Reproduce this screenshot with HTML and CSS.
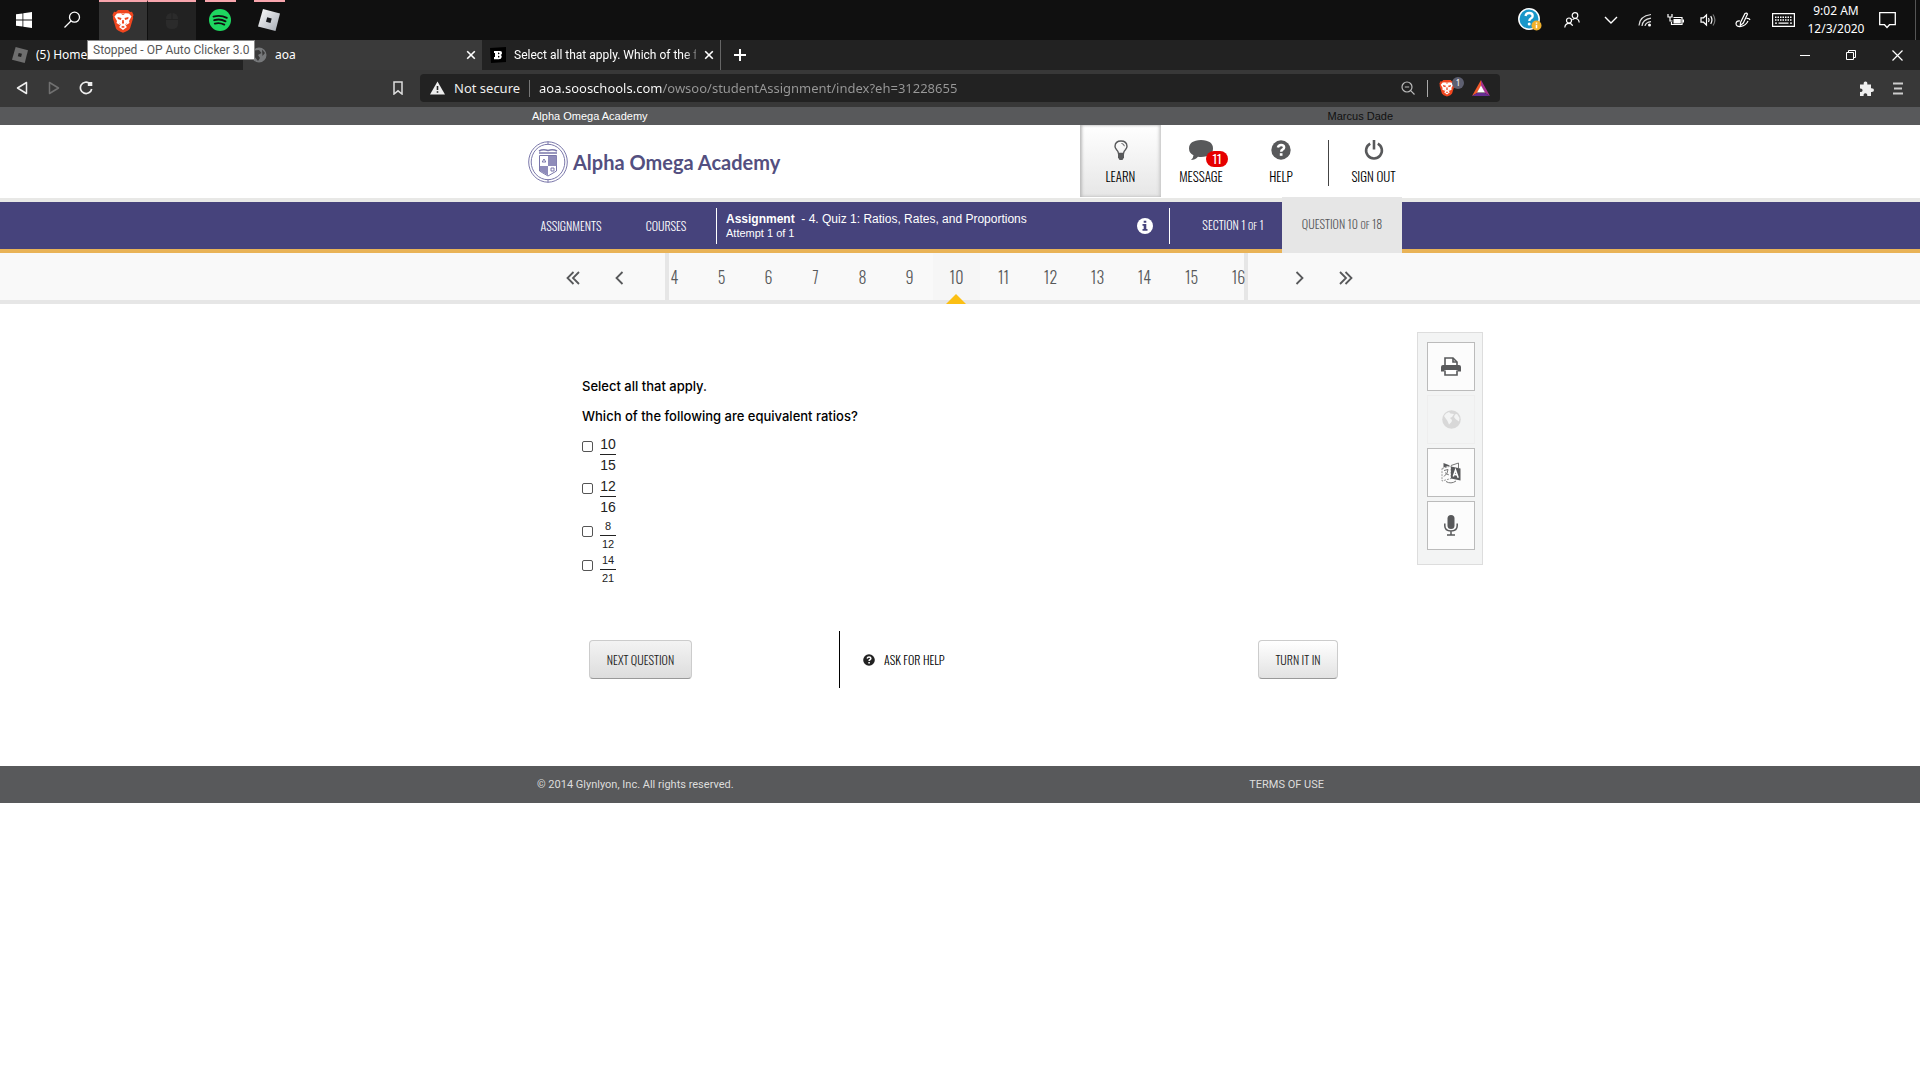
FILE: index.html
```html
<!DOCTYPE html>
<html lang="en">
<head>
<meta charset="utf-8">
<title>aoa</title>
<link rel="stylesheet" href="styles.css">
</head>
<body>
<svg class="defs" aria-hidden="true">
  <symbol id="lion" viewBox="0 0 22 24">
    <path fill="#f0461f" d="M6 1h10l2 2 2-.3L21.500 6l-.7 2 .4 1-3.200 10.500Q16.500 22 11 23.800 5.500 22 4 19.500L.8 9l.4-1-.7-2L2 2.700 4 3z"/>
    <path fill="#fff" d="M5 4.500l6-.5 6 .5 2.500 3L17 12l.5 2-4 2.500L15 18l-4 3-4-3 1.500-1.500L4.500 14l.5-2-2.500-4.500z"/>
    <path fill="#f0461f" d="M5.500 8l4 1-.7 2-3-1zM16.500 8l-4 1 .7 2 3-1zM8.500 4.500L11 6l2.500-1.500zM10.300 11h1.400l.4 3L11 15l-1.100-1zM7 14l2 1.500-1 .3zM15 14l-2 1.500 1 .3zM9 18l2-1.200L13 18l-2 1z"/>
  </symbol>
  <symbol id="close" viewBox="0 0 10 10"><path d="M1.200 1.200l7.600 7.600M8.800 1.200L1.200 8.800" fill="none" stroke="currentColor" stroke-width="1.600"/></symbol>
  <symbol id="question" viewBox="0 0 20 20">
    <circle cx="10" cy="10" r="9.700" fill="currentColor"/>
    <path d="M6.900 7.500Q7.500 4.900 10.100 4.900q3 0 3 2.500 0 1.300-1.600 2.200-1.300.7-1.300 2.100" fill="none" stroke="#fff" stroke-width="2.500"/>
    <path fill="#fff" d="M8.800 13.200h2.700v2.600H8.800z"/>
  </symbol>
  <symbol id="chev" viewBox="0 0 9 14"><path d="M7.500 1L1.500 7l6 6" fill="none" stroke="currentColor" stroke-width="1.800"/></symbol>
  <symbol id="dchev" viewBox="0 0 14 14"><path d="M7.500 1L1.500 7l6 6M13 1L7 7l6 6" fill="none" stroke="currentColor" stroke-width="1.800"/></symbol>
</svg>

<header class="taskbar">
  <div class="apps">
    <button class="app" aria-label="Start"><svg width="16" height="16" viewBox="0 0 16 16"><path fill="#fff" d="M0 2.300L6.500 1.400v6.200H0zM7.300 1.300L16 0v7.600H7.300zM0 8.400h6.500v6.200L0 13.700zM7.300 8.400H16V16l-8.700-1.300z"/></svg></button>
    <button class="app" aria-label="Search"><svg width="18" height="18" viewBox="0 0 18 18" fill="none" stroke="#fff" stroke-width="1.300"><circle cx="11.500" cy="6.200" r="5"/><path d="M8 10L1.500 16.500"/></svg></button>
    <button class="app tile active" aria-label="Brave"><svg width="22" height="24"><use href="#lion"/></svg></button>
    <div class="holder">
      <button class="app tile dim" aria-label="OP Auto Clicker"><svg width="14" height="18" viewBox="0 0 14 18"><path fill="#2b2b2b" d="M1 7Q1 1 6.500 1v6zM7.500 1Q13 1 13 7H7.500zM1 8h12v4q0 5-6 5t-6-5z"/></svg></button>
      <div class="tooltip" role="tooltip">Stopped - OP Auto Clicker 3.0</div>
    </div>
    <button class="app line" aria-label="Spotify"><svg width="22" height="22" viewBox="0 0 22 22"><circle cx="11" cy="11" r="11" fill="#1ed760"/><path d="M4.500 7.600q7-2 13.300 1.200M5.200 11.200q6-1.700 11.300 1.100M5.800 14.600q5-1.300 9.500 1" fill="none" stroke="#101010" stroke-width="1.900" stroke-linecap="round"/></svg></button>
    <button class="app line" aria-label="Roblox"><svg width="22" height="22" viewBox="0 0 22 22"><defs><linearGradient id="rb" x1="0" y1="0" x2="1" y2="1"><stop offset="0" stop-color="#fff"/><stop offset="1" stop-color="#a3a9b2"/></linearGradient></defs><path fill="url(#rb)" d="M5 0l17 4.500L17.500 22 0 17.500z"/><path fill="#16181c" d="M9.200 8.200l4.500 1.200-1.200 4.500L8 12.700z"/></svg></button>
  </div>
  <div class="tray">
    <button class="t-help" aria-label="Get help"><svg width="24" height="24" viewBox="0 0 24 24"><circle cx="11" cy="11" r="10.200" fill="#1a97c9" stroke="#fff" stroke-width="1.500"/><path d="M7.500 8q.5-3 3.700-3 3.500 0 3.500 2.900 0 1.600-1.900 2.600-1.500.8-1.500 2.500" fill="none" stroke="#fff" stroke-width="2.300"/><circle cx="11.200" cy="16" r="1.500" fill="#fff"/><circle cx="18.500" cy="17.500" r="5" fill="#f0b02c"/><path stroke="#fff" stroke-width="1.500" d="M18.500 14.500v1.200M18.500 16.800v3.400"/></svg></button>
    <button class="t-people" aria-label="People"><svg width="16" height="16" viewBox="0 0 16 16" fill="none" stroke="#fff" stroke-width="1.200"><circle cx="11" cy="3.500" r="2.800"/><circle cx="5" cy="8.500" r="2.500"/><path d="M.8 15.500q.3-4.200 4.200-4.200 2.800 0 3.600 2.500M8.500 8q1-1.500 2.700-1.500 3.600 0 4 4"/></svg></button>
    <button class="t-more" aria-label="Show hidden icons"><svg width="14" height="8" viewBox="0 0 14 8"><path d="M1 1l6 6 6-6" fill="none" stroke="#fff" stroke-width="1.400"/></svg></button>
    <button class="t-net" aria-label="Network"><svg width="14" height="14" viewBox="0 0 14 14" fill="none" stroke="#ddd" stroke-width="1.200"><path d="M1 12.500Q1.500 3 13 1.500M4 13q.5-6.500 9-7.800M7 13q.5-3.500 6-4.300"/><circle cx="11.500" cy="12" r="1.500" fill="#fff" stroke="none"/></svg></button>
    <button class="t-bat" aria-label="Battery"><svg width="17" height="12" viewBox="0 0 17 12"><path d="M1 0v3h4V0M3 3v4h2.500" fill="none" stroke="#fff" stroke-width="1.200"/><path d="M6.500 3.500h8.500v7H4.500V8" fill="none" stroke="#fff" stroke-width="1.200"/><path d="M6.500 5h7.300v4.500H6.500zM15.500 5.500H17v3h-1.500z" fill="#fff"/></svg></button>
    <button class="t-vol" aria-label="Volume"><svg width="17" height="14" viewBox="0 0 17 14" fill="none" stroke="#fff" stroke-width="1.200"><path d="M1 4.800h2.500L6.500 2v10L3.500 9.200H1zM8.500 5q1.200 2 0 4M10.700 3.200q2.500 3.800 0 7.600"/><path stroke="#777" d="M13 1.500q3.800 5.500 0 11"/></svg></button>
    <button class="t-pen" aria-label="Windows Ink"><svg width="16" height="16" viewBox="0 0 16 16" fill="none" stroke="#fff" stroke-width="1.200"><path d="M5.500 10.500l4.500-9q1.500-1 2.500.5L8.300 11l-3 2.500zM5 9q-3.500-.5-4 2.500 0 3.500 5 3 5-1 7-5.500M11.500 6.500q3-.3 3.500 1.500"/></svg></button>
    <button class="t-key" aria-label="Touch keyboard"><svg width="23" height="14" viewBox="0 0 23 14"><path d="M.6.600h21.800v12.800H.6z" fill="none" stroke="#fff" stroke-width="1.200"/><path d="M3 4.200h17M3 7h17" stroke="#fff" stroke-width="1.400" stroke-dasharray="1.500 1"/><path d="M3 10.200h2M6.500 10.200h10M18 10.200h2" stroke="#fff" stroke-width="1.300"/></svg></button>
    <button class="clock"><span>9:02 AM</span><span>12/3/2020</span></button>
    <button class="t-note" aria-label="Notifications"><svg width="17" height="17" viewBox="0 0 17 17"><path d="M.7.700h15.600v12H10.500L8 15.500l-2.500-2.800H.7z" fill="none" stroke="#fff" stroke-width="1.300"/></svg></button>
  </div>
</header>

<div class="tabs">
  <div class="tab"><svg width="16" height="16" viewBox="0 0 22 22"><path fill="#6e6e6e" d="M5 0l17 4.500L17.500 22 0 17.500z"/><path fill="#222" d="M9.200 8.200l4.500 1.200-1.200 4.500L8 12.700z"/></svg><span class="tab-name">(5) Home</span></div>
  <div class="tab current"><svg width="16" height="16" viewBox="0 0 16 16"><circle cx="8" cy="8" r="7.500" fill="#77797b"/><path fill="#3a3a3a" d="M3 3.500L8 3l2.500 3L7 8l2 3-2 3-4-5zM11 2.500L14 6l-2.500 3z"/></svg><span class="tab-name">aoa</span><button class="tab-x" aria-label="Close tab"><svg width="10" height="10"><use href="#close"/></svg></button></div>
  <div class="tab last"><svg width="16" height="16" viewBox="0 0 16 16"><path fill="#000" d="M0 1l16-1v15L1 16z"/><path fill="#fff" fill-rule="evenodd" d="M4 4h6q2.300 0 2 2.200Q12 7.500 10.700 8q1.200.6 1 2-.3 2.300-3 2.300H4V10h1V6H4zm4 1.600v1.600q1.500.1 1.500-.8T8 5.600zm0 3.100v1.900q1.500.1 1.500-.9T8 8.700z"/></svg><span class="tab-name fade">Select all that apply. Which of the f</span><button class="tab-x" aria-label="Close tab"><svg width="10" height="10"><use href="#close"/></svg></button></div>
  <button class="new-tab" aria-label="New tab"><svg width="12" height="12" viewBox="0 0 12 12"><path d="M6 0v12M0 6h12" stroke="#fff" stroke-width="2"/></svg></button>
  <div class="win">
    <button aria-label="Minimize"><svg width="10" height="10" viewBox="0 0 10 10"><path d="M0 5.500h10" stroke="#fff"/></svg></button>
    <button aria-label="Restore"><svg width="10" height="10" viewBox="0 0 10 10" fill="none" stroke="#fff"><path d="M.5 2.500h7v7h-7zM2.500 2.500v-2h7v7h-2"/></svg></button>
    <button aria-label="Close"><svg width="11" height="11" viewBox="0 0 11 11"><path d="M.5.500l10 10M10.500.500l-10 10" stroke="#fff" stroke-width="1.200"/></svg></button>
  </div>
</div>

<div class="toolbar">
  <div class="nav-btns">
    <button aria-label="Back"><svg width="12" height="14" viewBox="0 0 12 14"><path d="M10.500 1.500v11L1.500 7z" fill="none" stroke="#eee" stroke-width="1.500" stroke-linejoin="round"/></svg></button>
    <button aria-label="Forward"><svg width="12" height="14" viewBox="0 0 12 14"><path d="M1.500 1.500v11l9-5.500z" fill="none" stroke="#707070" stroke-width="1.500" stroke-linejoin="round"/></svg></button>
    <button aria-label="Reload"><svg width="14" height="14" viewBox="0 0 14 14"><path d="M10.800 2.500A5.700 5.700 0 1 0 12.700 8" fill="none" stroke="#eee" stroke-width="1.700"/><path fill="#eee" d="M8.800 5V1l4.500 0v4z"/></svg></button>
  </div>
  <button class="bookmark" aria-label="Bookmark this page"><svg width="10" height="14" viewBox="0 0 10 14"><path d="M1 1h8v12L5 9.800 1 13z" fill="none" stroke="#ddd" stroke-width="1.500"/></svg></button>
  <div class="address">
    <svg width="15" height="14" viewBox="0 0 15 14"><path fill="#eee" d="M7.500.500L15 13.500H0z"/><path fill="#222" d="M6.700 5h1.600v4H6.700zM6.700 10.200h1.600v1.600H6.700z"/></svg>
    <label class="secure" for="url">Not secure</label>
    <input id="url" class="url" type="text" value="aoa.sooschools.com/owsoo/studentAssignment/index?eh=31228655">
    <button aria-label="Zoom"><svg width="14" height="14" viewBox="0 0 14 14" fill="none" stroke="#bbb" stroke-width="1.200"><circle cx="6" cy="6" r="5"/><path d="M9.700 9.700L13.500 13.500M3.800 6h4.400"/></svg></button>
    <span class="sep"></span>
    <button class="shield" aria-label="Brave Shields"><svg width="16" height="18"><use href="#lion"/></svg><span class="count">1</span></button>
    <button aria-label="Brave Rewards"><svg width="18" height="16" viewBox="0 0 18 16"><path fill="#f15a2b" d="M9 0L0 16l5-3 4-7z"/><path fill="#a8328e" d="M9 0l9 16-5-3-4-7z"/><path fill="#662d91" d="M0 16h18l-5-3H5z"/><path fill="#fff" d="M9 5.500l4 7H5z"/></svg></button>
  </div>
  <div class="tools">
    <button aria-label="Extensions"><svg width="15" height="15" viewBox="0 0 15 15"><path fill="#eee" d="M1 3.500h3.700Q4.300.500 6.500.500t1.800 3H12v3.700q3-.3 3 1.900t-3 1.800v4H8.300q.2-2.700-1.900-2.700T4.600 15H1v-3.900q2.600.1 2.600-1.900T1 7.400z"/></svg></button>
    <button aria-label="Menu"><svg width="10" height="13" viewBox="0 0 10 13"><path d="M0 1.500h10M1 6.500h8M0 11.500h10" stroke="#ccc" stroke-width="1.800"/></svg></button>
  </div>
</div>

<div class="topbar"><div class="wrap"><a href="#">Alpha Omega Academy</a><span class="user">Marcus Dade</span></div></div>

<div class="brandbar"><div class="wrap">
  <a class="brand" href="#">
    <svg width="40" height="42" viewBox="0 0 40 42" fill="none" stroke="#7a77aa"><ellipse cx="20" cy="21" rx="19.300" ry="20.200"/><ellipse cx="20" cy="21" rx="16.800" ry="17.700"/><path d="M20 .500v3M20 38.500v3"/><path d="M11 10q4-2 9-.5 5-1.500 9 .5M11 12h18" stroke-width="1.500"/><path fill="#fff" d="M11.500 14.500h17V30L20 35l-8.500-5z"/><path fill="#8f8cba" stroke="none" d="M20 15h8.500v10H20zM12 25h8v9.500L12 30z"/><path d="M16 18l-1.800 3h3.600zM23 27h3v3h-3z"/></svg>
    <span>Alpha Omega Academy</span>
  </a>
  <nav class="menu">
    <a class="item on" href="#"><svg width="14" height="20" viewBox="0 0 14 20"><path d="M4.500 13.500Q4.300 11.500 2.600 9.800 1 8 1 6.200 1.300 1 7 1t6 5.200q0 1.800-1.600 3.600-1.700 1.700-1.900 3.700z" fill="none" stroke="#58595b" stroke-width="1.400"/><path fill="#58595b" d="M4 13.500h6v4L8.500 20h-3L4 17.500z"/><path d="M7.500 3.500q2.700.2 2.800 2.700" fill="none" stroke="#58595b"/></svg><span>LEARN</span></a>
    <a class="item" href="#"><span class="bubble"><svg width="24" height="20" viewBox="0 0 24 20"><path fill="#58595b" d="M12 0q12 .4 12 8.500T12 17q-1.500 0-3-.3Q6 20 2 20q2.300-2 2.500-4.800Q0 13 0 8.500 0 .4 12 0z"/></svg><b class="badge">11</b></span><span>MESSAGE</span></a>
    <a class="item" href="#"><svg class="gray" width="20" height="20"><use href="#question"/></svg><span>HELP</span></a>
    <a class="item out" href="#"><svg width="20" height="21" viewBox="0 0 20 21"><path d="M6 3.800a8.300 8.300 0 1 0 8 0M10 0v10" fill="none" stroke="#58595b" stroke-width="2.700"/></svg><span>SIGN OUT</span></a>
  </nav>
</div></div>

<div class="coursebar"><div class="wrap">
  <a class="c-assign" href="#">ASSIGNMENTS</a>
  <a class="c-course" href="#">COURSES</a>
  <div class="c-title"><p><b>Assignment</b> &nbsp;- 4. Quiz 1: Ratios, Rates, and Proportions</p><p class="attempt">Attempt 1 of 1</p></div>
  <button class="c-info" aria-label="Assignment details"><svg width="16" height="16" viewBox="0 0 16 16"><circle cx="8" cy="8" r="8" fill="#fff"/><path fill="#46437c" d="M6.700 2.700h2.600v2H6.700zM5.500 6h3.800v5h1.200v1.700h-5V11h1.200V7.700H5.500z"/></svg></button>
  <a class="c-section" href="#">SECTION 1&nbsp;<small>OF</small>&nbsp;1</a>
  <a class="c-question" href="#">QUESTION 10&nbsp;<small>OF</small>&nbsp;18</a>
</div></div>

<div class="pager"><div class="wrap">
  <div class="arrows start"><button aria-label="First"><svg width="14" height="14"><use href="#dchev"/></svg></button><button aria-label="Previous"><svg width="9" height="14"><use href="#chev"/></svg></button></div>
  <div class="pages">
    <a href="#">4</a><a href="#">5</a><a href="#">6</a><a href="#">7</a><a href="#">8</a><a href="#">9</a><a class="here" href="#">10</a><a href="#">11</a><a href="#">12</a><a href="#">13</a><a href="#">14</a><a href="#">15</a><a href="#">16</a>
  </div>
  <div class="arrows flip"><button aria-label="Last"><svg width="14" height="14"><use href="#dchev"/></svg></button><button aria-label="Next"><svg width="9" height="14"><use href="#chev"/></svg></button></div>
</div></div>

<div class="stage">
  <main class="quiz">
    <p>Select all that apply.</p>
    <p>Which of the following are equivalent ratios?</p>
    <form class="choices">
      <label class="choice"><input type="checkbox"><span class="frac"><span>10</span><span>15</span></span></label>
      <label class="choice"><input type="checkbox"><span class="frac"><span>12</span><span>16</span></span></label>
      <label class="choice small"><input type="checkbox"><span class="frac"><span>8</span><span>12</span></span></label>
      <label class="choice small"><input type="checkbox"><span class="frac"><span>14</span><span>21</span></span></label>
    </form>
    <div class="actions">
      <button class="btn next">NEXT QUESTION</button>
      <a class="ask" href="#"><svg width="12" height="12"><use href="#question"/></svg>ASK FOR HELP</a>
      <button class="btn turn">TURN IT IN</button>
    </div>
  </main>
  <aside class="side">
    <button aria-label="Print"><svg width="20" height="19" viewBox="0 0 20 19"><path d="M4 9V1h8l4 4v4M4 13.500v4.500h12v-4.500" fill="#fff" stroke="#58595b" stroke-width="1.600"/><path d="M12 1v4h4" fill="none" stroke="#58595b" stroke-width="1.600"/><path fill="#58595b" d="M2 8h16q2 0 2 2v4.500h-3.500V13h-13v1.500H0V10q0-2 2-2z"/></svg></button>
    <button disabled aria-label="Web"><svg width="19" height="19" viewBox="0 0 19 19"><circle cx="9.500" cy="9.500" r="9.300" fill="#d8d8d8"/><path fill="#f3f4f4" d="M2 6q1.500-3 5-4l1.500 1.500L12 4 10 7 8 8l2 2-.5 2-2.500 2.500L5.500 11zM13 4.500l2-.5 2.500 4-.5 3.500L13.500 9 12 7z"/></svg></button>
    <button aria-label="Translate"><svg width="20" height="22" viewBox="0 0 20 22"><path d="M1 6.500l9-2.500v12.500l-9 2.500z" fill="none" stroke="#9a9a9a" stroke-dasharray="2 1"/><path fill="#58595b" d="M2.500 1L9 3.500 2.500 5.500zM10 4.500l9.500 2v12l-9.500-2z"/><path d="M10 3.500L17.500 1v5" fill="none" stroke="#777"/><path d="M12.300 14.500l2.200-6.500 2.700 7.700M13 12.300l3.200.8" fill="none" stroke="#fff" stroke-width="1.500"/><path d="M3 8.500l4-1q0 4-4 7M4 10.500q1.500 2 3.800 2.300M5 19.500q5 3 10-.5" fill="none" stroke="#777"/></svg></button>
    <button aria-label="Record"><svg width="14" height="21" viewBox="0 0 14 21"><rect x="3.500" y="0" width="7" height="14" rx="3.500" fill="#58595b"/><path d="M.8 8.500v2.300q0 5.200 6.200 5.200t6.200-5.200V8.500M7 16v4M3 20h8" fill="none" stroke="#58595b" stroke-width="1.500"/></svg></button>
  </aside>
</div>

<footer class="foot"><div class="wrap"><span>© 2014 Glynlyon, Inc. All rights reserved.</span><a href="#">TERMS OF USE</a></div></footer>
</body>
</html>
```
FILE: styles.css
```css
* { box-sizing: border-box; }
body { margin: 0; background: #fff; font-family: "Noto Sans", sans-serif; color: #000; }
p { margin: 0; }
a { color: inherit; text-decoration: none; }
button { display: flex; align-items: center; justify-content: center; padding: 0; border: 0; background: none; color: inherit; font: inherit; }
svg { flex: none; display: block; }
.defs { position: absolute; width: 0; height: 0; }
.wrap { display: flex; width: min(884px, 100%); margin: 0 auto; }

/* Desktop taskbar */
.taskbar { display: flex; justify-content: space-between; height: 40px; background: #101010; color: #fff; }
.apps { display: flex; }
.app { width: 48px; height: 40px; }
.tile { border-top: 2px solid #f8a5ad; }
.active { width: 49px; margin-left: 3px; background: #333; border-right: 1px solid #101010; }
.dim { background: #222; }
.line { background: linear-gradient(#f8a5ad, #f8a5ad) center top / 31px 2px no-repeat; }
.line + .line { margin-left: 1px; }
.holder { position: relative; }
.tooltip { position: absolute; z-index: 2; top: 40px; left: -61px; height: 20px; padding: 0 5px; border: 1px solid #888; background: #fff; color: #575757; font: 12px/18px Roboto, sans-serif; white-space: nowrap; }
.tray { display: flex; align-items: center; padding-right: 4px; }
.tray button { height: 40px; }
.t-help { width: 44px; }
.t-people { width: 39px; }
.t-more { width: 40px; }
.t-net { width: 28px; }
.t-bat { width: 32px; }
.t-vol { width: 34px; }
.t-pen { width: 36px; }
.t-key { width: 44px; }
.tray .clock { flex-direction: column; width: 62px; font-size: 12px; line-height: 18px; }
.tray .t-note { width: 49px; padding-right: 7px; border-right: 1px solid #555; }

/* Browser tabs */
.tabs { display: flex; height: 30px; background: #222; color: #fff; font-size: 12px; }
.tab { display: flex; align-items: center; gap: 8px; width: 239px; padding: 0 6px 1px 8px; }
.tab:first-child { width: 243px; padding-left: 12px; }
.tab.current { background: #3a3a3a; }
.tab.last { border-right: 1px solid #666; }
.tab-name { flex: 1; min-width: 0; overflow: hidden; white-space: nowrap; }
.fade { font-family: Roboto, sans-serif; mask-image: linear-gradient(90deg, #000 170px, transparent 188px); }
.new-tab { width: 38px; }
.win { display: flex; margin-left: auto; }
.win button { width: 46px; }

/* Browser toolbar */
.toolbar { display: flex; align-items: center; height: 37px; padding-bottom: 1px; background: #383838; color: #eee; font-size: 13px; }
.nav-btns { display: flex; padding-left: 6px; }
.nav-btns button { width: 32px; height: 32px; }
.bookmark { width: 32px; height: 32px; margin-left: 280px; }
.address { display: flex; align-items: center; flex: 1; max-width: 1080px; height: 28px; margin-left: 6px; padding: 0 4px 0 10px; border-radius: 4px; background: #222; }
.address button { width: 30px; height: 28px; }
.secure { width: 76px; margin: 0 9px; border-right: 1px solid #777; line-height: 17px; white-space: nowrap; }
.url { flex: 1; min-width: 0; padding: 0; border: 0; outline: 0; background: linear-gradient(90deg, #fff 123px, #999 123px); background-clip: text; -webkit-background-clip: text; color: transparent; font: inherit; }
.sep { width: 1px; height: 17px; margin: 0 4px; background: #aaa; }
.address .shield { position: relative; margin-right: 4px; }
.count { position: absolute; top: 3px; right: -2px; width: 12px; height: 12px; border-radius: 6px; background: #5d5f70; color: #fff; font-size: 8px; line-height: 12px; }
.tools { display: flex; margin-left: auto; padding-right: 6px; }
.tools button { width: 32px; height: 32px; }

/* Site header */
.topbar { background: #58595b; font: 11px/18px "Liberation Sans", sans-serif; color: #fff; }
.topbar .wrap { justify-content: space-between; padding: 0 9px 0 14px; }
.user { color: #111; }
.brandbar { border-bottom: 4px solid #e8e8e6; }
.brandbar .wrap { height: 73px; }
.brand { display: flex; align-items: center; gap: 5px; padding-left: 10px; color: #534f80; font: bold 20px Lato, sans-serif; white-space: nowrap; }
.menu { display: flex; margin-left: auto; font: 300 13px/16px Oswald, sans-serif; }
.item { display: flex; flex-direction: column; align-items: center; gap: 8px; width: 80px; height: 72px; padding-top: 15px; white-space: nowrap; }
.item svg { height: 20px; }
.on { width: 81px; background: linear-gradient(#fff, #e6e6e6); box-shadow: inset 2px 0 3px #bbb, inset -2px 0 3px #ccc; }
.out { width: 81px; padding-left: 24px; background: linear-gradient(#444, #444) 7px 15px / 1px 46px no-repeat; }
.gray { color: #58595b; }
.bubble { position: relative; }
.badge { position: absolute; top: 11px; left: 17px; width: 22px; height: 16px; border-radius: 8px; background: #e60000; color: #fff; text-align: center; font-weight: 400; font-size: 12px; }

/* Course bar */
.coursebar { background: #46437c; border-bottom: 4px solid #e9b357; color: #fff; font: 12px/16px Oswald, sans-serif; font-weight: 300; }
.coursebar .wrap { align-items: center; height: 47px; }
.c-assign { width: 106px; text-align: center; }
.c-course { width: 84px; text-align: center; }
.c-title { flex: 1; height: 36px; margin-left: 8px; padding: 4px 0 0 9px; border-left: 1px solid #fff; font: 12px/15px "Liberation Sans", sans-serif; white-space: nowrap; }
.attempt { font-size: 11px; line-height: 13px; }
.c-info { width: 50px; height: 36px; border-right: 1px solid #fff; }
.c-section { width: 112px; padding-left: 14px; text-align: center; }
.c-question { width: 120px; height: 56px; margin: -5px 0 -4px; align-self: flex-end; line-height: 54px; background: #e6e6e6; color: #58595b; text-align: center; }
small { font-size: 10px; }

/* Question pager */
.pager { border-bottom: 4px solid #e6e6e6; background: #f9f9f9; color: #58595b; }
.pager .wrap { height: 47px; }
.arrows { display: flex; flex: 1; gap: 12px; padding-left: 38px; align-items: center; }
.arrows.start { flex: none; width: 147px; padding-left: 37px; }
.arrows button { width: 35px; height: 38px; padding-top: 2px; }
.flip { transform: scaleX(-1); }
.pages { display: flex; justify-content: center; flex: none; width: 583px; border: solid #e6e6e6; border-width: 0 4px; clip-path: inset(0 0 -4px); font: 300 16px/49px Oswald, sans-serif; }
.pages a { flex: none; width: 47px; text-align: center; }
.here { position: relative; background: #f6f6f6; }
.here::after { content: ""; position: absolute; left: 13px; bottom: -4px; border: solid transparent; border-width: 0 10px 10px; border-bottom-color: #fbbf14; }

/* Question */
.stage { display: grid; grid-template-columns: 1fr minmax(0, 884px) 1fr; }
.quiz { grid-column: 2; padding: 67px 64px 78px; font: 500 13px/30px Inter, sans-serif; }
.choices { display: flex; flex-direction: column; }
.choice { display: flex; gap: 7px; height: 42px; padding-top: 3px; }
.choice input { appearance: none; width: 11px; height: 11px; margin: 7px 0 0; border: 1px solid #555; border-radius: 2px; }
.frac { display: grid; width: 16px; height: 34px; text-align: center; font: 14px/20px "Liberation Sans", sans-serif; color: #222; }
.frac span + span { border-top: 1px solid #222; }
.small { height: 34px; }
.small input { margin-top: 8px; }
.small .frac { font-size: 11px; line-height: 16px; }
.actions { display: flex; align-items: center; height: 57px; margin-top: 48px; padding-left: 7px; font: 300 12px/16px Oswald, sans-serif; }
.btn { height: 39px; border: 1px solid #ccc; border-bottom-color: #999; border-radius: 4px; background: linear-gradient(#fff, #e2e2e2); color: #222; }
.next { width: 103px; background: linear-gradient(#f3f3f3, #ddd); }
.ask { display: flex; align-items: center; gap: 9px; height: 57px; margin-left: 147px; padding-left: 23px; border-left: 1px solid #000; }
.ask svg { color: #222; }
.turn { width: 80px; margin-left: auto; }
.side { display: flex; flex-direction: column; gap: 4px; width: 66px; height: 233px; margin: 28px 0 0 15px; padding: 9px; border: 1px solid #ddd; background: #f3f4f4; }
.side button { width: 48px; height: 49px; border: 1px solid #bbb; background: #fcfcfc; }
.side button:disabled { border-color: #eee; background: #f3f4f4; }

/* Footer */
.foot { background: #58595b; color: #ddd; font: 11px/37px Roboto, sans-serif; }
.foot .wrap { justify-content: space-between; padding: 0 78px 0 19px; }
```
